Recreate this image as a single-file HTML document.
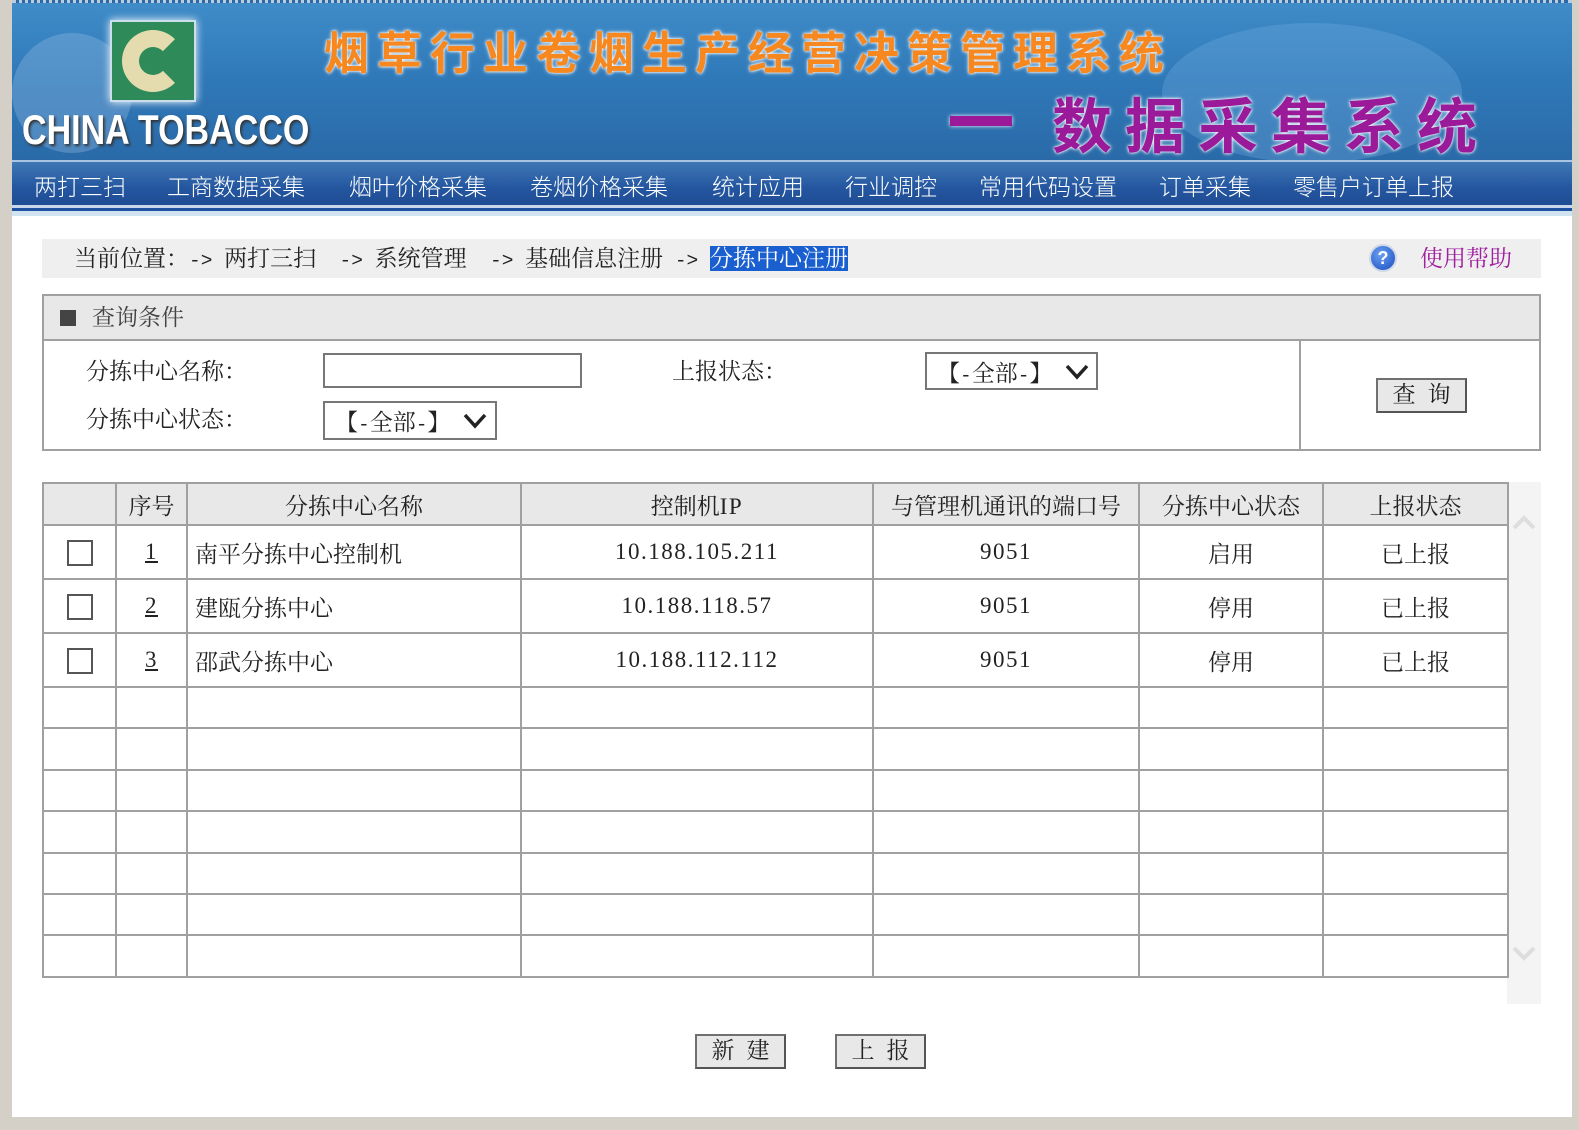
<!DOCTYPE html>
<html><head><meta charset="utf-8"><style>
*{margin:0;padding:0;box-sizing:border-box}
body{width:1579px;height:1130px;background:#d4d0c8;position:relative;overflow:hidden;font-family:"Liberation Serif","Noto Serif CJK SC",serif;color:#222}
.m{font-family:"Liberation Mono",monospace;font-size:19.5px}
.n{font-family:"Liberation Serif",serif;letter-spacing:1.5px}
.page{position:absolute;left:12px;top:0;width:1560px;height:1117px;background:#fff}
.abs{position:absolute}
.banner{left:0;top:0;width:1560px;height:160px;background:linear-gradient(180deg,#3f8cc8 0%,#2f78b8 50%,#2a6aa8 100%);border-top:3px dotted #bcd;overflow:hidden}
.nav{left:0;top:160px;width:1560px;height:48px;background:linear-gradient(180deg,#3f78b4,#2456a0 60%,#1f4d94);border-top:2px solid #a8c4e0;border-bottom:3px solid #c8d8ea}
.nav span{position:absolute;top:6px;color:#fff;font-size:23px;font-family:"Noto Sans CJK SC",sans-serif;font-weight:300}
.line2{left:0;top:208px;width:1560px;height:8px;background:linear-gradient(180deg,#2050a0 0,#2050a0 3px,#cfe3f0 3px)}
.t1{left:312px;top:14px;font-size:45px;color:#f7871f;font-weight:bold;letter-spacing:8px;text-shadow:0 0 4px #fff,0 0 2px #fff;font-family:"Noto Sans CJK SC",sans-serif}
.t2{left:1040px;top:76px;font-size:60px;color:#9a1a9a;font-weight:bold;letter-spacing:13px;text-shadow:0 0 4px #fff,0 0 2px #fff;font-family:"Noto Sans CJK SC",sans-serif}
.dash{left:938px;top:113px;width:62px;height:10px;background:#9a1a9a;box-shadow:0 0 4px #fff}
.logo{left:98px;top:17px;width:86px;height:82px;background:#2f8a5a;border:2px solid #cde;box-shadow:0 0 8px #fff}
.ct{left:10px;top:103px;font-family:"Liberation Sans",sans-serif;font-weight:bold;font-size:42px;color:#fff;transform:scaleX(.81);transform-origin:left;text-shadow:2px 2px 3px #333}
.bc{left:30px;top:239px;width:1499px;height:39px;background:#efefef;font-size:23px}
.q{left:30px;top:294px;width:1499px;height:157px;border:2px solid #a0a0a0}
.qh{left:0;top:0;width:1495px;height:45px;background:#e8e8e8;border-bottom:2px solid #a0a0a0;font-size:23px}
.lbl{font-size:23px}
.btn{background:#e8e8e8;border:2px solid #707070;border-right-color:#555;border-bottom-color:#555;font-size:23px;text-align:center;line-height:30px;letter-spacing:12px;padding-left:12px}
.sel{border:2px solid #777;font-size:23px;background:#fff}
table{position:absolute;left:30px;top:482px;border-collapse:collapse;font-size:23px}
td{border:2px solid #a0a0a0;text-align:center;padding:0}
tr.h td{background:#e8e8e8;height:42px}
tr.d td{height:54px}
tr.e td{height:41.4px}
.cb{display:inline-block;width:26px;height:26px;border:2px solid #555;vertical-align:middle}
</style></head><body>
<div class="page">
 <div class="abs banner">
  <div class="abs" style="left:0;top:30px;width:120px;height:120px;border-radius:50%;background:rgba(150,190,230,.35)"></div>
  <div class="abs" style="left:1150px;top:20px;width:300px;height:140px;border-radius:50%;background:rgba(120,180,230,.3)"></div>
  <div class="abs logo"><div class="abs" style="left:10px;top:8px;width:62px;height:62px;border-radius:50%;border:17px solid #e4dcae;border-right-color:transparent"></div></div>
  <div class="abs ct">CHINA TOBACCO</div>
  <div class="abs t1">烟草行业卷烟生产经营决策管理系统</div>
  <div class="abs dash"></div>
  <div class="abs t2">数据采集系统</div>
 </div>
 <div class="abs nav">
  <span style="left:22px">两打三扫</span><span style="left:155px">工商数据采集</span><span style="left:337px">烟叶价格采集</span><span style="left:518px">卷烟价格采集</span><span style="left:700px">统计应用</span><span style="left:833px">行业调控</span><span style="left:967px">常用代码设置</span><span style="left:1147px">订单采集</span><span style="left:1281px">零售户订单上报</span>
 </div>
 <div class="abs line2"></div>
 <div class="abs bc">
  <span class="abs" style="left:32px;top:1px;white-space:pre">当前位置：<span class="m">-&gt; </span>两打三扫<span class="m">  -&gt; </span>系统管理<span class="m">  -&gt; </span>基础信息注册<span class="m"> -&gt; </span><span style="background:#1a5fd0;color:#fff">分拣中心注册</span></span>
  <div class="abs" style="left:1327px;top:5px;width:28px;height:28px;border-radius:50%;background:radial-gradient(circle at 40% 35%,#6aa0f0,#1a4cc0);border:2px solid #cfd8e8;color:#fff;font:bold 18px 'Liberation Sans',sans-serif;text-align:center;line-height:24px">?</div>
  <span class="abs" style="left:1378px;top:1px;color:#a020a0">使用帮助</span>
 </div>
 <div class="abs q">
  <div class="abs qh"><div class="abs" style="left:16px;top:14px;width:16px;height:16px;background:#444"></div><span class="abs" style="left:48px;top:3px;color:#444">查询条件</span></div>
  <div class="abs" style="left:1255px;top:45px;width:2px;height:110px;background:#a0a0a0"></div>
  <span class="abs lbl" style="left:42px;top:57px">分拣中心名称：</span>
  <span class="abs lbl" style="left:42px;top:105px">分拣中心状态：</span>
  <span class="abs lbl" style="left:628px;top:57px">上报状态：</span>
  <div class="abs" style="left:279px;top:57px;width:259px;height:35px;border:2px solid #777"></div>
  <div class="abs sel" style="left:279px;top:105px;width:174px;height:39px"><span class="abs" style="left:10px;top:1px">【<span class="m">-</span>全部<span class="m">-</span>】</span><svg class="abs" style="left:138px;top:10px" width="24" height="16"><path d="M2 2L12 13L22 2" stroke="#222" stroke-width="3.5" fill="none"/></svg></div>
  <div class="abs sel" style="left:881px;top:56px;width:173px;height:38px"><span class="abs" style="left:10px;top:1px">【<span class="m">-</span>全部<span class="m">-</span>】</span><svg class="abs" style="left:138px;top:10px" width="24" height="16"><path d="M2 2L12 13L22 2" stroke="#222" stroke-width="3.5" fill="none"/></svg></div>
  <div class="abs btn" style="left:1332px;top:82px;width:91px;height:35px">查询</div>
 </div>
 <div class="abs" style="left:1495px;top:482px;width:34px;height:522px;background:#f4f4f4">
  <svg class="abs" style="left:5px;top:32px" width="24" height="16"><path d="M2 14L12 4L22 14" stroke="#ddd" stroke-width="4" fill="none"/></svg>
  <svg class="abs" style="left:5px;top:464px" width="24" height="16"><path d="M2 2L12 12L22 2" stroke="#ddd" stroke-width="4" fill="none"/></svg>
 </div>
 <table>
  <colgroup><col style="width:73px"><col style="width:71px"><col style="width:334px"><col style="width:352px"><col style="width:266px"><col style="width:184px"><col style="width:185px"></colgroup>
  <tr class="h"><td></td><td>序号</td><td>分拣中心名称</td><td>控制机<span class="n">IP</span></td><td>与管理机通讯的端口号</td><td>分拣中心状态</td><td>上报状态</td></tr>
  <tr class="d"><td><span class="cb"></span></td><td><u class="n">1</u></td><td style="text-align:left;padding-left:7px">南平分拣中心控制机</td><td class="n">10.188.105.211</td><td class="n">9051</td><td>启用</td><td>已上报</td></tr>
  <tr class="d"><td><span class="cb"></span></td><td><u class="n">2</u></td><td style="text-align:left;padding-left:7px">建瓯分拣中心</td><td class="n">10.188.118.57</td><td class="n">9051</td><td>停用</td><td>已上报</td></tr>
  <tr class="d"><td><span class="cb"></span></td><td><u class="n">3</u></td><td style="text-align:left;padding-left:7px">邵武分拣中心</td><td class="n">10.188.112.112</td><td class="n">9051</td><td>停用</td><td>已上报</td></tr>
  <tr class="e"><td></td><td></td><td></td><td></td><td></td><td></td><td></td></tr>
  <tr class="e"><td></td><td></td><td></td><td></td><td></td><td></td><td></td></tr>
  <tr class="e"><td></td><td></td><td></td><td></td><td></td><td></td><td></td></tr>
  <tr class="e"><td></td><td></td><td></td><td></td><td></td><td></td><td></td></tr>
  <tr class="e"><td></td><td></td><td></td><td></td><td></td><td></td><td></td></tr>
  <tr class="e"><td></td><td></td><td></td><td></td><td></td><td></td><td></td></tr>
  <tr class="e"><td></td><td></td><td></td><td></td><td></td><td></td><td></td></tr>
 </table>
 <div class="abs btn" style="left:683px;top:1034px;width:91px;height:35px">新建</div>
 <div class="abs btn" style="left:823px;top:1034px;width:91px;height:35px">上报</div>
</div>
</body></html>
